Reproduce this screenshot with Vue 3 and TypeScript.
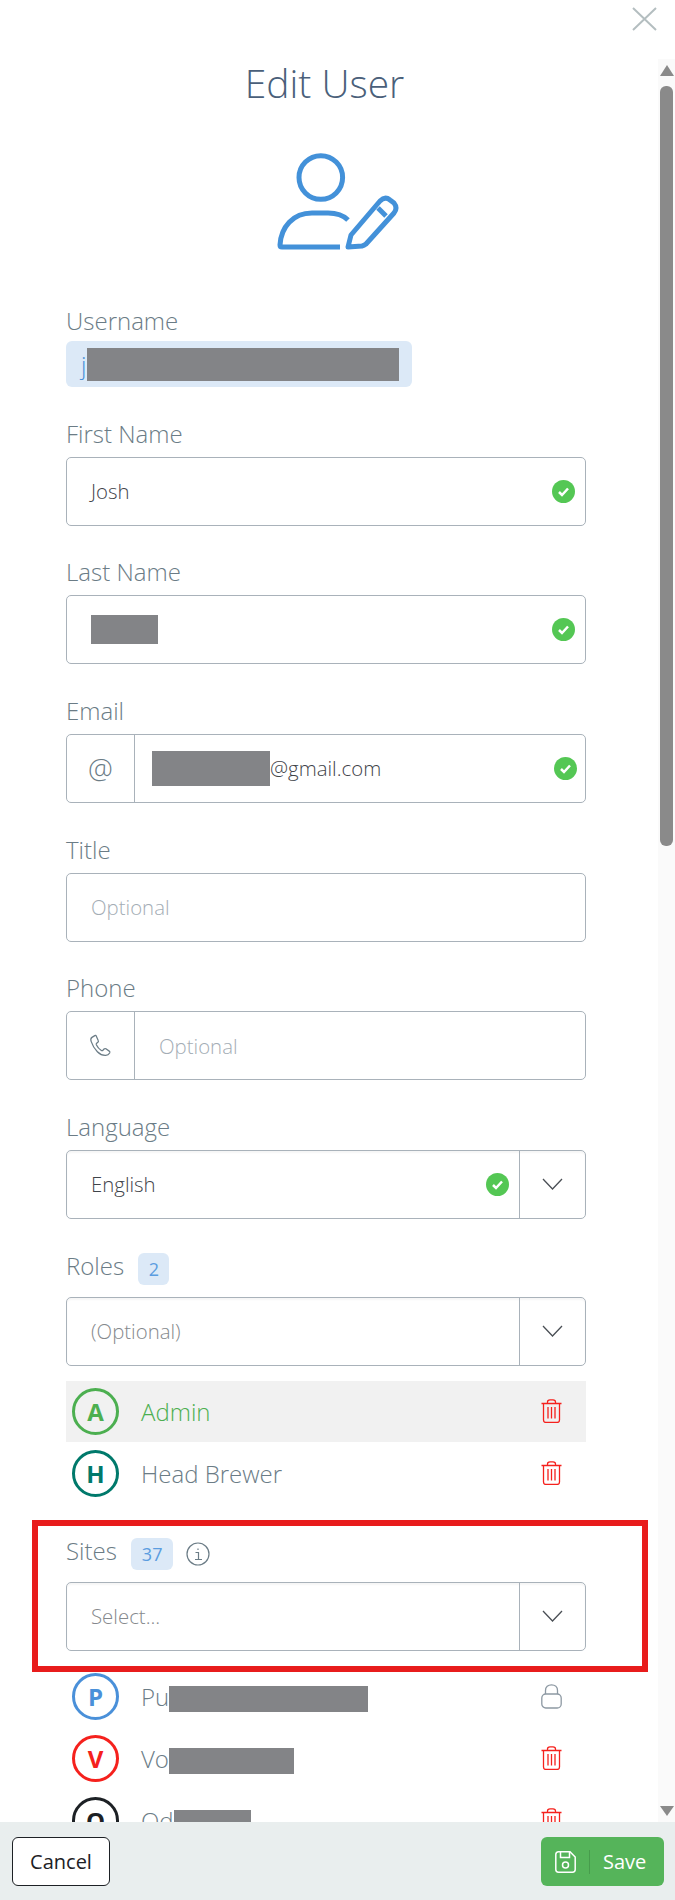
<template>
  <div class="sheet">
    <button class="close" type="button" aria-label="Close">
      <svg viewBox="0 0 25 24" width="25" height="24"><path d="M1 1 24 23M24 1 1 23" /></svg>
    </button>

    <div class="body">
      <main class="form">
        <h1 class="title">Edit User</h1>
        <svg class="user-icon" viewBox="0 0 150 120" width="150" height="120" aria-hidden="true">
          <circle cx="60.8" cy="37.5" r="21.8" />
          <path d="M88 80C83 75 76 73 68 73H52C33 73 21 87 20 105C20 106.500 20.500 107 22 107H80" />
          <path d="M88 107 91 95 120 61Q125 56 130 60L134 63Q138 68 134 73L106 104Q104 105.500 102 106Z" />
          <path d="M118 68 126 76" />
        </svg>

        <div class="username">
          <label class="label">Username</label>
          <div class="chip">j<span class="redact chip-redact"></span></div>
        </div>

        <div v-for="field in fields" :key="field.label" class="field">
          <label class="label">{{ field.label }}</label>
          <div class="control" :class="{ 'is-select': field.select }">
            <span v-if="field.addon" class="addon">
              <template v-if="field.addon === 'at'">@</template>
              <svg v-else viewBox="0 0 24 24" width="25" height="25" class="phone">
                <path d="M6.500 2.500 3.800 4.200C2.600 5 2.500 6.500 3 8c1.500 4.500 3.500 7.500 6 10 2.200 2.200 5 3.700 8 3.500 1.500-.1 3-1 3.800-2.300.4-.7.2-1.400-.4-1.800l-3.200-2.200c-.6-.4-1.300-.3-1.800.2l-1.100 1.200c-.4.4-1 .5-1.500.2-2.200-1.400-3.800-3.300-4.800-5.500-.2-.5-.1-1 .3-1.400l1.200-1c.5-.4.600-1.100.3-1.700L7.900 2.900c-.3-.6-.9-.7-1.400-.4Z" />
              </svg>
            </span>
            <span class="value" :class="{ placeholder: field.placeholder }">
              <span
                v-if="field.redact"
                class="redact"
                :style="{ width: field.redact[0] + 'px', height: field.redact[1] + 'px' }"
              ></span>{{ field.value }}
            </span>
            <svg v-if="field.valid" class="check" :class="{ inset: field.addon }" viewBox="0 0 23 23" width="23" height="23">
              <circle cx="11.500" cy="11.500" r="11.500" />
              <path d="M7 12 10 15 16 8.500" />
            </svg>
            <span v-if="field.select" class="caret">
              <svg viewBox="0 0 21 12" width="21" height="12"><path d="M1 1 10.500 11 20 1" /></svg>
            </span>
          </div>
        </div>

        <div class="field compact">
          <label class="label">Roles <span class="badge">2</span></label>
          <div class="control is-select">
            <span class="value muted">(Optional)</span>
            <span class="caret">
              <svg viewBox="0 0 21 12" width="21" height="12"><path d="M1 1 10.500 11 20 1" /></svg>
            </span>
          </div>
        </div>

        <ul class="list">
          <li v-for="item in roles" :key="item.name" class="row" :class="{ active: item.active }">
            <span class="avatar" :style="{ color: item.color }">{{ item.letter }}</span>
            <span class="name">{{ item.name }}</span>
            <svg class="action trash" viewBox="0 0 21 24" width="21" height="24">
              <path d="M.5 4.500h20M6.500 4.500V3C6.500 1.500 7.500.8 9 .8h3c1.500 0 2.500.7 2.500 2.200v1.500M2.500 4.500V21c0 1.500 1 2.500 2.500 2.500h11c1.500 0 2.500-1 2.500-2.500V4.500M7 8v11.500M10.500 8v11.500M14 8v11.500" />
            </svg>
          </li>
        </ul>

        <div class="sites">
          <div class="highlight"></div>
          <label class="label">
            Sites <span class="badge wide">37</span>
            <svg class="info" viewBox="0 0 24 24" width="24" height="24">
              <circle cx="12" cy="12" r="11" />
              <path d="M9.500 10.500H12.500V17.500M9 17.500H16M12 6.500V8" />
            </svg>
          </label>
          <div class="control is-select">
            <span class="value muted">Select...</span>
            <span class="caret">
              <svg viewBox="0 0 21 12" width="21" height="12"><path d="M1 1 10.500 11 20 1" /></svg>
            </span>
          </div>
        </div>

        <ul class="list">
          <li v-for="item in sites" :key="item.name" class="row">
            <span class="avatar" :style="{ color: item.color }">{{ item.letter }}</span>
            <span class="name">{{ item.name }}<span class="redact site-redact" :style="{ width: item.redact + 'px' }"></span></span>
            <svg v-if="item.locked" class="action lock" viewBox="0 0 21 25" width="21" height="25">
              <rect x=".8" y="10" width="19.400" height="14" rx="4" />
              <path d="M4.500 10V6.500C4.500 3 7 .8 10.500 .8S16.500 3 16.500 6.500V10" />
            </svg>
            <svg v-else class="action trash" viewBox="0 0 21 24" width="21" height="24">
              <path d="M.5 4.500h20M6.500 4.500V3C6.500 1.500 7.500.8 9 .8h3c1.500 0 2.500.7 2.500 2.200v1.500M2.500 4.500V21c0 1.500 1 2.500 2.500 2.500h11c1.500 0 2.500-1 2.500-2.500V4.500M7 8v11.500M10.500 8v11.500M14 8v11.500" />
            </svg>
          </li>
        </ul>
      </main>

      <div class="scrollbar" aria-hidden="true">
        <span class="arrow up"></span>
        <span class="thumb"></span>
        <span class="arrow down"></span>
      </div>
    </div>

    <footer class="footer">
      <button class="btn cancel" type="button">Cancel</button>
      <button class="btn save" type="button">
        <svg viewBox="0 0 21 22" width="21" height="22">
          <path d="M3.500 .8H15L20.200 6V18.500C20.200 20 19.300 21.200 17.500 21.200H3.500C1.800 21.200 .8 20 .8 18.500V3.500C.8 2 1.800 .8 3.500 .8Z" />
          <path d="M5.500 1V6.500H14.500V1" />
          <circle cx="10.500" cy="14" r="3" />
        </svg>
        <span class="save-sep"></span>
        <span>Save</span>
      </button>
    </footer>
  </div>
</template>

<script setup lang="ts">
interface Field {
  label: string
  value?: string
  redact?: [number, number]
  placeholder?: boolean
  valid?: boolean
  addon?: 'at' | 'phone'
  select?: boolean
}

const fields: Field[] = [
  { label: 'First Name', value: 'Josh', valid: true },
  { label: 'Last Name', redact: [67, 29], valid: true },
  { label: 'Email', value: '@gmail.com', redact: [118, 35], valid: true, addon: 'at' },
  { label: 'Title', value: 'Optional', placeholder: true },
  { label: 'Phone', value: 'Optional', placeholder: true, addon: 'phone' },
  { label: 'Language', value: 'English', valid: true, select: true },
]

const roles = [
  { letter: 'A', name: 'Admin', color: '#4caf50', active: true },
  { letter: 'H', name: 'Head Brewer', color: '#00796b', active: false },
]

const sites = [
  { letter: 'P', name: 'Pu', color: '#4a90d9', redact: 199, locked: true },
  { letter: 'V', name: 'Vo', color: '#f5211d', redact: 125, locked: false },
  { letter: 'O', name: 'Od', color: '#1d2125', redact: 77, locked: false },
]
</script>

<style>
html,
body {
  margin: 0;
  background: #fff;
}
</style>

<style scoped>
.sheet {
  position: relative;
  display: flex;
  flex-direction: column;
  width: 675px;
  height: 1900px;
  overflow: hidden;
  background: #fff;
  font-family: "Open Sans", "Liberation Sans", sans-serif;
}

.close {
  position: absolute;
  top: 7px;
  right: 18px;
  padding: 0;
  border: 0;
  background: none;
  line-height: 0;
}

.close path {
  fill: none;
  stroke: #b4bec0;
  stroke-width: 2;
}

.body {
  display: flex;
  flex: 1;
  min-height: 0;
  overflow: hidden;
  padding-top: 59px;
}

.form {
  flex: 1;
  min-width: 0;
  padding: 0 72px 0 66px;
}

.title {
  margin: 0;
  padding-right: 3px;
  text-align: center;
  color: #4a5f7a;
  font-size: 39px;
  font-weight: 300;
  line-height: 48px;
}

.user-icon {
  display: block;
  margin: 33px 0 0 194px;
  fill: none;
  stroke: #4391d9;
  stroke-width: 5;
  stroke-linejoin: round;
  stroke-linecap: butt;
}

.label {
  display: block;
  height: 38px;
  color: #6b7c86;
  font-size: 24px;
  font-weight: 300;
  line-height: 30px;
}

.username {
  margin-top: 46px;
}

.username .label {
  height: 35px;
}

.chip {
  display: flex;
  align-items: center;
  box-sizing: border-box;
  width: 346px;
  height: 46px;
  padding-left: 15px;
  border-radius: 6px;
  background: #dce9f7;
  color: #4a90d9;
  font-size: 24px;
  font-weight: 300;
}

.redact {
  display: inline-block;
  flex: none;
  background: #838487;
}

.chip-redact {
  width: 312px;
  height: 33px;
  margin-left: 1px;
}

.field {
  margin-top: 31.600px;
}

.username + .field {
  margin-top: 31.800px;
}

.control {
  display: flex;
  align-items: center;
  box-sizing: border-box;
  height: 69px;
  border: 1px solid #a9b2ba;
  border-radius: 5px;
  background: #fff;
  color: #3f444a;
  font-size: 20.400px;
  font-weight: 300;
}

.control.is-select {
  box-shadow: inset 0 2px 2px rgba(0, 0, 0, 0.04);
}

.addon {
  display: flex;
  flex: none;
  align-items: center;
  justify-content: center;
  align-self: stretch;
  box-sizing: border-box;
  width: 68px;
  border-right: 1px solid #a9b2ba;
  color: #6b7c86;
  font-size: 28px;
  font-weight: 300;
}

.phone {
  fill: none;
  stroke: #6b7c86;
  stroke-width: 1.200;
}

.value {
  display: flex;
  flex: 1;
  align-items: center;
  min-width: 0;
  padding-left: 24px;
}

.addon + .value {
  padding-left: 17px;
}

.addon + .placeholder {
  padding-left: 24px;
}

.placeholder {
  color: #a4adb5;
}

.muted {
  color: #85898d;
}

.check {
  flex: none;
  margin-right: 10px;
}

.check.inset {
  margin-right: 8px;
}

.check circle {
  fill: #54c754;
}

.check path {
  fill: none;
  stroke: #fff;
  stroke-width: 2.500;
}

.caret {
  display: flex;
  flex: none;
  align-items: center;
  justify-content: center;
  align-self: stretch;
  box-sizing: border-box;
  width: 66px;
  border-left: 1px solid #a9b2ba;
}

.caret svg {
  fill: none;
  stroke: #4a4f55;
  stroke-width: 1.300;
}

.badge {
  display: inline-block;
  box-sizing: border-box;
  width: 31px;
  height: 32px;
  margin-left: 8px;
  border-radius: 6px;
  background: #dce9f7;
  color: #5b9de0;
  font-size: 18px;
  font-weight: 400;
  line-height: 33px;
  text-align: center;
  vertical-align: -1.500px;
}

.badge.wide {
  width: 42px;
}

.compact {
  margin-top: 32.200px;
}

.compact .label {
  height: 46px;
}

.list {
  margin: 15px 0 0;
  padding: 0;
  list-style: none;
}

.row {
  display: flex;
  align-items: center;
  height: 61px;
  margin-bottom: 1px;
  padding: 0 24px 0 6px;
}

.row.active {
  background: #f1f1f1;
}

.row.active .name {
  color: #4caf50;
}

.avatar {
  display: flex;
  flex: none;
  align-items: center;
  justify-content: center;
  box-sizing: border-box;
  width: 47px;
  height: 47px;
  border: 3px solid currentColor;
  border-radius: 50%;
  font-size: 24px;
  font-weight: 700;
}

.name {
  display: flex;
  flex: 1;
  align-items: center;
  margin-left: 22px;
  color: #6b7c86;
  font-size: 24px;
  font-weight: 300;
}

.site-redact {
  height: 26px;
  margin-top: 6px;
}

.action {
  flex: none;
  fill: none;
  stroke-width: 1.300;
}

.trash {
  stroke: #f5211d;
}

.lock {
  stroke: #8d99a3;
}

.sites {
  position: relative;
  margin-top: 32px;
}

.sites .label {
  height: 46px;
}

.highlight {
  position: absolute;
  top: -16px;
  right: -62px;
  left: -34px;
  box-sizing: border-box;
  height: 152px;
  border: 6px solid #e81c1c;
  pointer-events: none;
}

.info {
  margin-left: 13px;
  vertical-align: -6px;
  fill: none;
  stroke: #6b7c86;
  stroke-width: 1.200;
}

.scrollbar {
  display: flex;
  flex: none;
  flex-direction: column;
  align-items: center;
  width: 17px;
  background: #fafafa;
}

.arrow {
  flex: none;
  width: 0;
  height: 0;
  border-right: 7px solid transparent;
  border-left: 7px solid transparent;
}

.arrow.up {
  margin-top: 6px;
  border-bottom: 11px solid #8a8a8a;
}

.arrow.down {
  margin-top: auto;
  margin-bottom: 6px;
  border-top: 10px solid #8a8a8a;
}

.thumb {
  flex: none;
  width: 13px;
  height: 760px;
  margin-top: 10px;
  border-radius: 6px;
  background: #8a8a8a;
}

.footer {
  display: flex;
  flex: none;
  align-items: flex-start;
  justify-content: space-between;
  box-sizing: border-box;
  height: 78px;
  padding: 15px 11px 0 12px;
  background: #e9eeee;
}

.btn {
  height: 49px;
  border-radius: 6px;
  font-family: inherit;
  font-size: 20px;
  font-weight: 400;
}

.cancel {
  width: 98px;
  padding: 0;
  border: 1px solid #1d2125;
  background: #fff;
  color: #1d2125;
}

.save {
  display: flex;
  align-items: center;
  width: 123px;
  padding: 0 0 0 14px;
  border: 0;
  background: #55b45a;
  color: #fff;
}

.save svg {
  fill: none;
  stroke: #fff;
  stroke-width: 1.500;
}

.save-sep {
  width: 1px;
  height: 24px;
  margin: 0 13px 0 13px;
  background: #479c4c;
}
</style>
